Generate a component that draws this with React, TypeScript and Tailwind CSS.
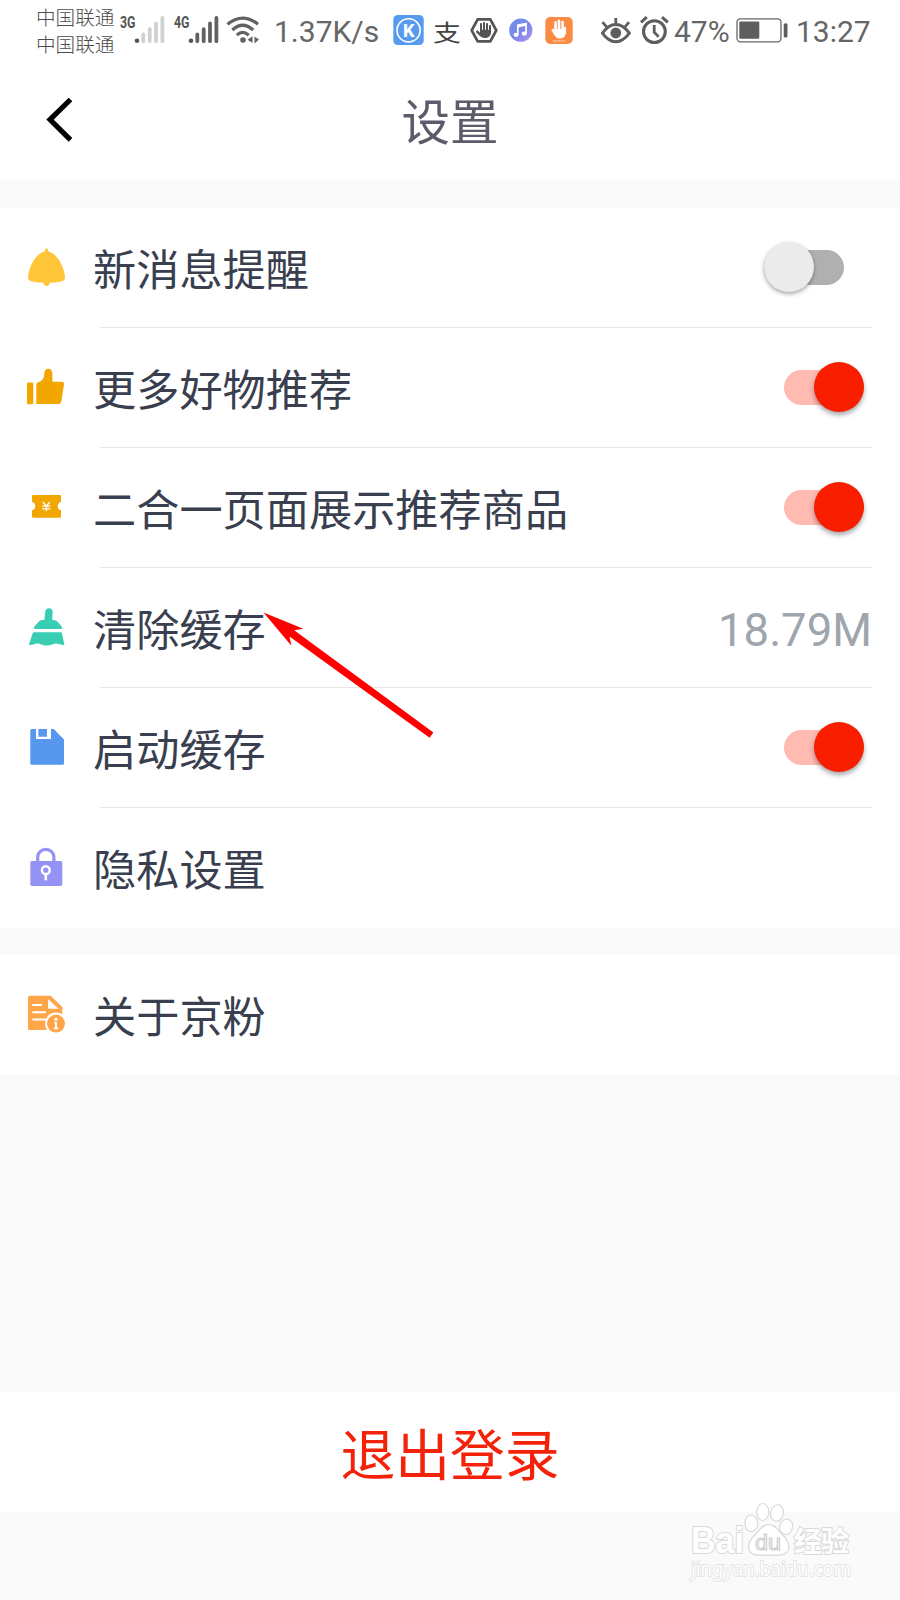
import React, {useState, ReactNode} from "react";
import { FaHand } from "react-icons/fa6";

type Setting = {
  id: string;
  label: string;
  icon: ReactNode;
  value?: string;
  toggle?: boolean;
};

const BellIcon = () => (
  <svg width="40" height="40" viewBox="0 0 40 40" fill="#ffc63a" className="overflow-visible">
    <path d="M19 1.5Q20.5-.8 22 1.5V3.2C30 5 37.5 16 39 29Q39.3 32.6 35 33.4Q29 34.6 23.6 34.8Q23.4 38 20.5 38Q17.6 38 17.4 34.8Q12 34.6 6 33.4Q1.7 32.6 2 29C3.5 16 11 5 19 3.2Z" />
  </svg>
);

const ThumbIcon = () => (
  <svg width="40" height="40" viewBox="0 0 40 40" fill="#f1a600">
    <rect x="1" y="14.4" width="6.3" height="21.8" rx="1.3" />
    <path d="M10.3 36.1V16.2Q10.3 14.8 11.8 14.4C16.2 12.8 18.2 10.5 18.3 5.4Q18.6.7 22.3.7Q26.3.7 26.4 6V13.7H35.8Q38.3 13.7 38 16.4L35.4 33Q34.8 36.1 32 36.1Z" />
  </svg>
);

const TicketIcon = () => (
  <svg width="40" height="40" viewBox="0 0 40 40">
    <path fill="#f1a600" d="M7.2 7H33.9Q35 7 35 8.2V13.8A4.6 4.6 0 0 0 35 22.6V28.6Q35 29.7 33.9 29.7H7.2Q6 29.7 6 28.6V22.6A4.6 4.6 0 0 0 6 13.8V8.2Q6 7 7.2 7Z" />
    <path d="M17 14L20.4 18.2L23.8 14M20.4 18V23.3M16.3 18.2H24.5M16.3 20.8H24.5" stroke="#fff" strokeWidth="1.3" fill="none" />
  </svg>
);

const BroomIcon = () => (
  <svg width="40" height="40" viewBox="0 0 40 40" fill="#39ceb4">
    <path d="M19.2 4Q19.6.3 23 .3Q26.8.3 26.6 4L26.2 12H27.5Q30 12 31.8 14L35.8 18.8Q37 21 34.8 21H9.2Q7 21 8.2 18.8L12.4 14Q14 12 16.2 12H18.4Z" />
    <path d="M8 24.3H34.8Q35.8 24.3 36 25.4L38.3 36.2Q38.3 37.3 37 37C33.5 36.4 32 35.4 30.4 35.4C28 35.4 25 37.6 20.6 37.6C16 37.6 14 35.4 11.6 35.4C9 35.4 7 36.6 4.4 37Q2.9 37.2 3.1 36L6.6 25.4Q6.9 24.3 8 24.3Z" />
  </svg>
);

const DiskIcon = () => (
  <svg width="40" height="40" viewBox="0 0 40 40">
    <path fill="#5897ee" d="M5.8 1H27.7L38 11.6V35.2Q38 36.7 36.5 36.7H5.8Q4.3 36.7 4.3 35.2V2.5Q4.3 1 5.8 1Z" />
    <path fill="#fff" d="M10 .8H12.4V8.7H21V.8H25V11H10Z" />
  </svg>
);

const LockIcon = () => (
  <svg width="40" height="40" viewBox="0 0 40 40" className="overflow-visible">
    <path d="M11.7 14V9.3A8.1 7.9 0 0 1 27.9 9.3V14" fill="none" stroke="#9592f5" strokeWidth="3.2" />
    <rect x="4.3" y="12.9" width="32" height="25.2" rx="1.8" fill="#9592f5" />
    <circle cx="19.8" cy="22.2" r="3.9" fill="none" stroke="#fff" strokeWidth="2.5" />
    <path d="M19.8 25V32.3" stroke="#fff" strokeWidth="2.6" />
  </svg>
);

const AboutIcon = () => (
  <svg width="40" height="40" viewBox="0 0 40 40">
    <path fill="#ffa54a" d="M3.5.7H24.7L36.3 12V33.5Q36.3 35 34.8 35H3.5Q2 35 2 33.5V2.2Q2 .7 3.5.7Z" />
    <path fill="#fff" d="M22 4V13.7H32.5Z" />
    <path d="M6.3 10H16M6.3 17.3H20M6.3 24.5H20" stroke="#fff" strokeWidth="1.9" />
    <circle cx="30" cy="28.6" r="11" fill="#fff" />
    <circle cx="30" cy="28.6" r="9" fill="#ffa54a" />
    <path d="M30 27.4V33.8M28.3 27.6H30.6M28 33.4H32.2" stroke="#fff" strokeWidth="1.8" />
    <circle cx="29.9" cy="24.2" r="1.5" fill="#fff" />
  </svg>
);

// mobile signal: first dot is always dark, the bars follow the signal
const Signal = ({ label, strong }: { label: string; strong: boolean }) => (
  <svg width="50" height="60" viewBox="0 0 50 60" className="shrink-0">
    <text x="2" y="28" fontSize="16" fontWeight="700" fill="#555" textLength="15.5" lengthAdjust="spacingAndGlyphs" className="font-['Roboto']">{label}</text>
    <circle cx="19" cy="40.7" r="2.3" fill="#555" />
    <g stroke={strong ? "#626262" : "#d0d0d0"} strokeWidth="3.8" strokeLinecap="round">
      <path d="M25.3 34.4V41.2M31.7 29.2V41.2M38 23.4V41.2M44.4 18V41.2" />
    </g>
  </svg>
);

const WifiIcon = () => (
  <svg width="36" height="60" viewBox="0 0 36 60" fill="none" stroke="#626262" strokeWidth="3.2" className="shrink-0">
    <path d="M1.5 24.2Q16.5 12 32 24.2M6.3 30Q16.5 20.5 27.2 30M10.8 35.2Q16.5 29.5 22.7 35.2" />
    <circle cx="17" cy="40" r="2.8" fill="#626262" stroke="none" />
    <path d="M26.5 36.3V43L21.6 39.7ZM28.5 36.6V43.5L33 39.5Z" fill="#626262" stroke="none" />
  </svg>
);

function StatusBar() {
  return (
    <div className="flex h-[60px] items-center overflow-hidden whitespace-nowrap pl-9 font-['Roboto','Noto_Sans_CJK_SC',sans-serif] text-[30px] text-[#666]">
      <div className="flex w-[82px] shrink-0 flex-col pt-[3px] text-[19.6px] font-light leading-[27px] text-[#4c4c4c]">
        <span>中国联通</span>
        <span>中国联通</span>
      </div>
      <Signal label="3G" strong={false} />
      <div className="w-1 shrink-0" />
      <Signal label="4G" strong />
      <div className="w-1 shrink-0" />
      <WifiIcon />
      <span className="ml-3 w-[119px] shrink-0 pt-0.5">1.37K/s</span>

      <svg width="31" height="60" viewBox="0 0 31 60" className="shrink-0">
        <rect x=".3" y="15" width="30.4" height="30" rx="4.5" fill="#569bf0" />
        <circle cx="15.6" cy="30.3" r="11.6" fill="none" stroke="#fff" strokeWidth="1.6" />
        <text x="15.8" y="36.6" fontSize="18" fontWeight="800" textAnchor="middle" fill="#fff">K</text>
      </svg>
      <span className="ml-[9px] w-[29px] shrink-0 scale-y-[0.82] pt-2 text-[28px] leading-none text-[#444]">支</span>
      <svg width="28" height="60" viewBox="0 0 28 60" className="ml-2 shrink-0">
        <path d="M7.7 19.3H20.3L26.3 30.3L20.3 41.3H7.7L1.7 30.3Z" fill="none" stroke="#555" strokeWidth="2.8" strokeLinejoin="round" />
        <FaHand x="6" y="22" size={16} color="#555" />
      </svg>
      <svg width="24" height="60" viewBox="0 0 24 60" className="ml-[11px] shrink-0">
        <defs>
          <linearGradient id="music" x1="0" y1="0" x2="1" y2="1">
            <stop offset="0" stopColor="#6d93ea" />
            <stop offset=".55" stopColor="#7d86ea" />
            <stop offset="1" stopColor="#b596f0" />
          </linearGradient>
        </defs>
        <circle cx="11.8" cy="30.2" r="11.6" fill="url(#music)" />
        <path d="M8.8 34.6V26L17 24V33.4" fill="none" stroke="#fff" strokeWidth="1.7" />
        <path d="M8 24.6L17.8 22.6V25.6L8 27.8Z" fill="#fff" />
        <ellipse cx="7.1" cy="34.8" rx="2.6" ry="2.1" fill="#fff" />
        <ellipse cx="15.3" cy="33.6" rx="2.6" ry="2.1" fill="#fff" />
      </svg>
      <svg width="28" height="60" viewBox="0 0 28 60" className="ml-3 shrink-0">
        <rect x=".3" y="17" width="27.4" height="27" rx="5" fill="#fb8a45" />
        <g stroke="#fff" strokeWidth="2.6" strokeLinecap="round" fill="none">
          <path d="M10.6 22.5V32M14 20.8V32M17.6 22V32M7.8 30L10.5 34.5M19.8 28V33" />
        </g>
        <path d="M9.4 29H21V33Q20 38.5 14.8 38.5Q10.6 38.5 9.4 34Z" fill="#fff" />
        <path d="M8.2 41H20.5" stroke="#ffd5bb" strokeWidth="1.6" strokeDasharray="1.5 1" />
      </svg>

      <svg width="32" height="60" viewBox="0 0 32 60" fill="none" stroke="#5e5e5e" className="ml-[27px] shrink-0">
        <path d="M2.4 33.2Q8.5 24.6 15.8 24.6T29.4 33.2Q23 41.8 15.8 41.8T2.4 33.2Z" strokeWidth="3" strokeLinejoin="round" />
        <circle cx="15.8" cy="33" r="5.4" fill="#5e5e5e" stroke="none" />
        <path d="M15.8 18V24.6M2.5 22.2L6.8 27.2M29 22.2L24.8 27.2" strokeWidth="2.8" />
      </svg>
      <svg width="29" height="60" viewBox="0 0 29 60" fill="none" stroke="#5e5e5e" className="ml-2 shrink-0">
        <circle cx="14.4" cy="31.6" r="10.9" strokeWidth="3.1" />
        <path d="M14.2 25V32.3L18.6 36.8" strokeWidth="2.8" />
        <path d="M1 22.4L6.8 17.2M27.8 22.4L22 17.2" strokeWidth="3" />
      </svg>
      <span className="ml-[5px] w-[62px] shrink-0 pt-0.5">47%</span>
      <svg width="52" height="60" viewBox="0 0 52 60" className="shrink-0">
        <rect x="1" y="18.8" width="44" height="23" rx="3.5" fill="none" stroke="#666" strokeWidth="1.3" />
        <rect x="3.3" y="21.6" width="20" height="17.2" rx="1" fill="#5e5e5e" />
        <rect x="47.7" y="23.2" width="3.8" height="14.4" rx="1.6" fill="#5e5e5e" />
      </svg>
      <span className="ml-2 shrink-0 pt-0.5">13:27</span>
    </div>
  );
}

const Toggle = ({ on, onClick }: { on: boolean; onClick: () => void }) => (
  <button
    role="switch"
    aria-checked={on}
    onClick={onClick}
    className={on
      ? "mr-2 mb-[2px] flex h-[35px] w-20 shrink-0 items-center justify-end rounded-full bg-[#ffbab2]"
      : "mr-7 mb-[2px] flex h-[35px] w-20 shrink-0 items-center justify-start rounded-full bg-[#b0b0b0]"}
  >
    <span className={on
      ? "size-[50px] shrink-0 rounded-full bg-[#fa1e00] shadow-[0_3px_5px_rgba(0,0,0,0.35)]"
      : "size-[50px] shrink-0 rounded-full bg-[#ebebeb] shadow-[0_2px_4px_rgba(0,0,0,0.35)]"}
    />
  </button>
);

const settings: Setting[] = [
  { id: "message", label: "新消息提醒", icon: <BellIcon />, toggle: true },
  { id: "goods", label: "更多好物推荐", icon: <ThumbIcon />, toggle: true },
  { id: "combine", label: "二合一页面展示推荐商品", icon: <TicketIcon />, toggle: true },
  { id: "clear", label: "清除缓存", icon: <BroomIcon />, value: "18.79M" },
  { id: "cache", label: "启动缓存", icon: <DiskIcon />, toggle: true },
  { id: "privacy", label: "隐私设置", icon: <LockIcon /> },
];

const Row = ({ icon, label, children }: { icon: ReactNode; label: string; children?: ReactNode }) => (
  <div className="flex h-[120px] items-center pl-[26px] pr-7">
    <span className="size-10 shrink-0">{icon}</span>
    <span className="ml-[27px] flex-1 whitespace-nowrap pb-[3px] text-[43.2px] leading-[60px] text-[#393f4f]">{label}</span>
    {children}
  </div>
);

export default function App() {
  const [enabled, setEnabled] = useState<Record<string, boolean>>({
    message: false,
    goods: true,
    combine: true,
    cache: true,
  });

  const flip = (id: string) => setEnabled({ ...enabled, [id]: !enabled[id] });

  return (
    <div className="relative h-[1600px] w-[900px] overflow-hidden bg-[#fafafa] font-['Noto_Sans_CJK_SC',sans-serif]">
      <div className="bg-white">
        <StatusBar />
        <header className="grid h-[120px] grid-cols-[100px_1fr_100px] items-center">
          <svg width="30" height="50" viewBox="0 0 30 50" className="ml-[45px]" fill="none" stroke="#000" strokeWidth="5.2">
            <path d="M25.5 4.5L5 24.6L25.5 44.8" />
          </svg>
          <h1 className="pb-0.5 text-center text-[48.5px] leading-[60px] text-[#5b5b69]">设置</h1>
        </header>
      </div>

      <section className="mt-7 bg-white">
        {settings.map((item, i) => (
          <div key={item.id}>
            <Row icon={item.icon} label={item.label}>
              {item.toggle && <Toggle on={enabled[item.id]} onClick={() => flip(item.id)} />}
              {item.value && <span className="pt-[5px] font-['Roboto'] text-[45.5px] leading-[60px] text-[#9fa5ad]">{item.value}</span>}
            </Row>
            {i < settings.length - 1 && <div className="-mt-px ml-[100px] mr-7 h-px bg-[#e6e6e8]" />}
          </div>
        ))}
      </section>

      <section className="mt-[27px] bg-white">
        <Row icon={<AboutIcon />} label="关于京粉" />
      </section>

      <button className="mt-[317px] block h-[120px] w-full bg-white pb-0.5 text-center text-[54.8px] text-[#f5220a]">退出登录</button>

      {/* pointer to the clear cache row */}
      <svg width="174" height="130" viewBox="0 0 174 130" className="pointer-events-none absolute left-[262px] top-[610px]">
        <path fill="#fe0000" d="M1.5 2.5L41.3 18.7L32.2 20.2L171.4 122.4L167.6 127.8L27.5 26.4L29.4 35.7Z" />
      </svg>

      {/* watermark */}
      <svg width="180" height="100" viewBox="0 0 180 100" className="pointer-events-none absolute left-[680px] top-[1495px]" fill="#fff" stroke="#d9d9d9" strokeWidth="1.2">
        <g fontWeight="700" style={{ paintOrder: "stroke" }} strokeWidth="2">
          <text x="11" y="58" fontSize="37" textLength="53" lengthAdjust="spacingAndGlyphs" className="font-['Liberation_Sans']">Bai</text>
          <text x="114" y="56.5" fontSize="28" textLength="55" className="font-['Noto_Sans_CJK_SC']">经验</text>
        </g>
        <ellipse cx="71.3" cy="28.3" rx="6.4" ry="8.3" />
        <ellipse cx="82.8" cy="17" rx="6" ry="8.5" />
        <ellipse cx="97" cy="18" rx="6.4" ry="8.3" transform="rotate(12 97 18)" />
        <ellipse cx="106.2" cy="31.8" rx="6.4" ry="7.8" transform="rotate(12 106.2 31.8)" />
        <path d="M88.5 29.5C95 29.5 98.5 36 103.5 41C108 45.5 110.5 50 108 55.5C105.5 60.5 100 60.5 88.5 60C77 60.5 72 60.5 69.3 55.5C67 50 69.5 45.5 74 41C79 36 82 29.5 88.5 29.5Z" />
        <text x="75" y="54.5" fontSize="22" textLength="26" lengthAdjust="spacingAndGlyphs" fill="#fff" stroke="#d0d0d0" className="font-['Liberation_Sans']">du</text>
        <text x="11" y="81" fontSize="20" textLength="160" lengthAdjust="spacingAndGlyphs" strokeWidth="1.6" stroke="#dedede" style={{ paintOrder: "stroke" }} className="font-['Noto_Sans']">jingyan.baidu.com</text>
      </svg>
    </div>
  );
}
